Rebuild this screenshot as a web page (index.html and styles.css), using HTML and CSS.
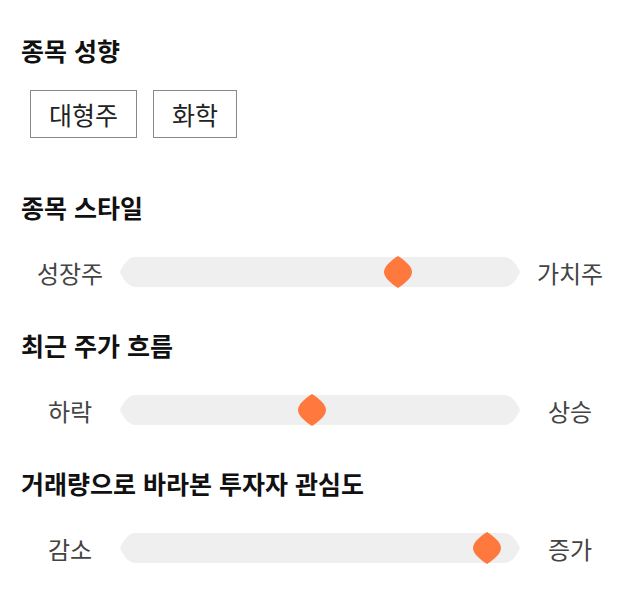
FILE: index.html
```html
<!DOCTYPE html>
<html lang="ko">
<head>
<meta charset="utf-8">
<link rel="stylesheet" href="styles.css">
</head>
<body>
<div class="page">
  <section class="section">
    <h2 class="title">종목 성향</h2>
    <div class="chips">
      <span class="chip">대형주</span>
      <span class="chip">화학</span>
    </div>
  </section>

  <section class="section">
    <h2 class="title">종목 스타일</h2>
    <div class="slider-row">
      <span class="side">성장주</span>
      <div class="track">
        <svg class="track-bg" width="400" height="30" viewBox="0 0 400 30"><path d="M16,0 H384 C392,0 397,8 400,15 C397,22 392,30 384,30 H16 C8,30 3,22 0,15 C3,8 8,0 16,0 Z" fill="#efefef"/></svg>
        <svg class="thumb" style="left:69.5%" width="28" height="32" viewBox="0 0 28 32"><path d="M14,0 C20,4 28,10 28,16 C28,22 20,28 14,32 C8,28 0,22 0,16 C0,10 8,4 14,0 Z" fill="#ff783e"/></svg>
      </div>
      <span class="side">가치주</span>
    </div>
  </section>

  <section class="section">
    <h2 class="title">최근 주가 흐름</h2>
    <div class="slider-row">
      <span class="side">하락</span>
      <div class="track">
        <svg class="track-bg" width="400" height="30" viewBox="0 0 400 30"><path d="M16,0 H384 C392,0 397,8 400,15 C397,22 392,30 384,30 H16 C8,30 3,22 0,15 C3,8 8,0 16,0 Z" fill="#efefef"/></svg>
        <svg class="thumb" style="left:48%" width="28" height="32" viewBox="0 0 28 32"><path d="M14,0 C20,4 28,10 28,16 C28,22 20,28 14,32 C8,28 0,22 0,16 C0,10 8,4 14,0 Z" fill="#ff783e"/></svg>
      </div>
      <span class="side">상승</span>
    </div>
  </section>

  <section class="section">
    <h2 class="title">거래량으로 바라본 투자자 관심도</h2>
    <div class="slider-row">
      <span class="side">감소</span>
      <div class="track">
        <svg class="track-bg" width="400" height="30" viewBox="0 0 400 30"><path d="M16,0 H384 C392,0 397,8 400,15 C397,22 392,30 384,30 H16 C8,30 3,22 0,15 C3,8 8,0 16,0 Z" fill="#efefef"/></svg>
        <svg class="thumb" style="left:91.8%" width="28" height="32" viewBox="0 0 28 32"><path d="M14,0 C20,4 28,10 28,16 C28,22 20,28 14,32 C8,28 0,22 0,16 C0,10 8,4 14,0 Z" fill="#ff783e"/></svg>
      </div>
      <span class="side">증가</span>
    </div>
  </section>
</div>
</body>
</html>
```

FILE: styles.css
```css
html, body {
  margin: 0;
  padding: 0;
  background: #ffffff;
}

body {
  font-family: "Noto Sans CJK KR", "Noto Sans", sans-serif;
  color: #111;
}

.page {
  padding: 35px 20px 0 20px;
}

.section {
  margin-bottom: 43px;
}

.section:first-child {
  margin-bottom: 54px;
}

.title {
  margin: 0 0 25px 1px;
  font-size: 25px;
  font-weight: 700;
  line-height: 30px;
  color: #111;
}

.chips {
  display: flex;
  gap: 16px;
  padding-left: 10px;
}

.chip {
  box-sizing: border-box;
  height: 48px;
  padding: 0 18px;
  border: 1px solid #888;
  display: flex;
  align-items: center;
  font-size: 25px;
  color: #222;
}

.slider-row {
  display: flex;
  align-items: center;
  margin-top: 35px;
  height: 30px;
}

.side {
  width: 100px;
  text-align: center;
  font-size: 24px;
  color: #444;
}

.track {
  position: relative;
  width: 400px;
  height: 30px;
}

.track-bg {
  display: block;
}

.thumb {
  position: absolute;
  top: -1px;
  transform: translateX(-14px);
}
```
